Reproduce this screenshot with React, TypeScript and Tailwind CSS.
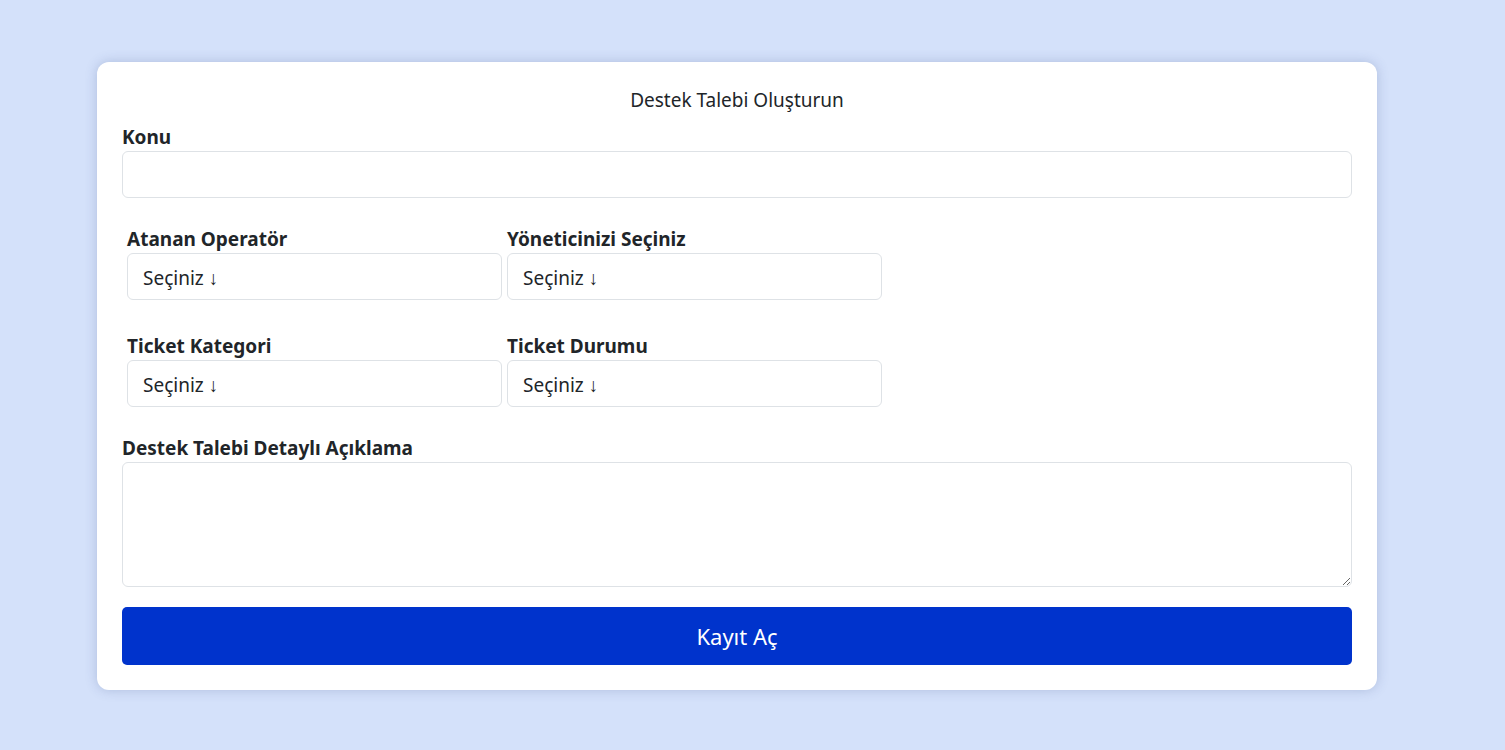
import React from "react";

const Select = () => (
  <div className="h-[47px] w-[375px] rounded-[6px] border border-[#dee2e6] bg-white pl-[15px] pt-[4px] flex items-center text-[19px] text-[#212529]">
    Seçiniz ↓
  </div>
);

const Label = ({ children }: { children: React.ReactNode }) => (
  <div className="text-[19px] font-bold leading-[27px] text-[#212529]">{children}</div>
);

export default function App() {
  return (
    <div
      className="min-h-[750px] w-full bg-[#d4e1fa] pt-[62px]"
      style={{ fontFamily: '"Segoe UI", "Noto Sans", sans-serif' }}
    >
      <div className="ml-[97px] w-[1280px] rounded-[12px] bg-white px-[25px] pt-[24px] pb-[25px] shadow-[0_0_12px_rgba(60,80,140,0.25)] text-[#212529]">
        <div className="text-center text-[19px] leading-[28px]">Destek Talebi Oluşturun</div>
        <div className="mt-[10px]">
          <Label>Konu</Label>
        </div>
        <div className="h-[47px] w-full rounded-[6px] border border-[#dee2e6]" />
        <div className="mt-[28px] flex gap-[5px] pl-[5px]">
          <div>
            <Label>Atanan Operatör</Label>
            <Select />
          </div>
          <div>
            <Label>Yöneticinizi Seçiniz</Label>
            <Select />
          </div>
        </div>
        <div className="mt-[33px] flex gap-[5px] pl-[5px]">
          <div>
            <Label>Ticket Kategori</Label>
            <Select />
          </div>
          <div>
            <Label>Ticket Durumu</Label>
            <Select />
          </div>
        </div>
        <div className="mt-[28px]">
          <Label>Destek Talebi Detaylı Açıklama</Label>
        </div>
        <textarea className="block h-[125px] w-full rounded-[6px] border border-[#dee2e6] outline-none" />
        <button className="mt-[20px] flex h-[58px] w-full items-center justify-center rounded-[5px] bg-[#0033cc] text-[22px] text-white">
          Kayıt Aç
        </button>
      </div>
    </div>
  );
}
